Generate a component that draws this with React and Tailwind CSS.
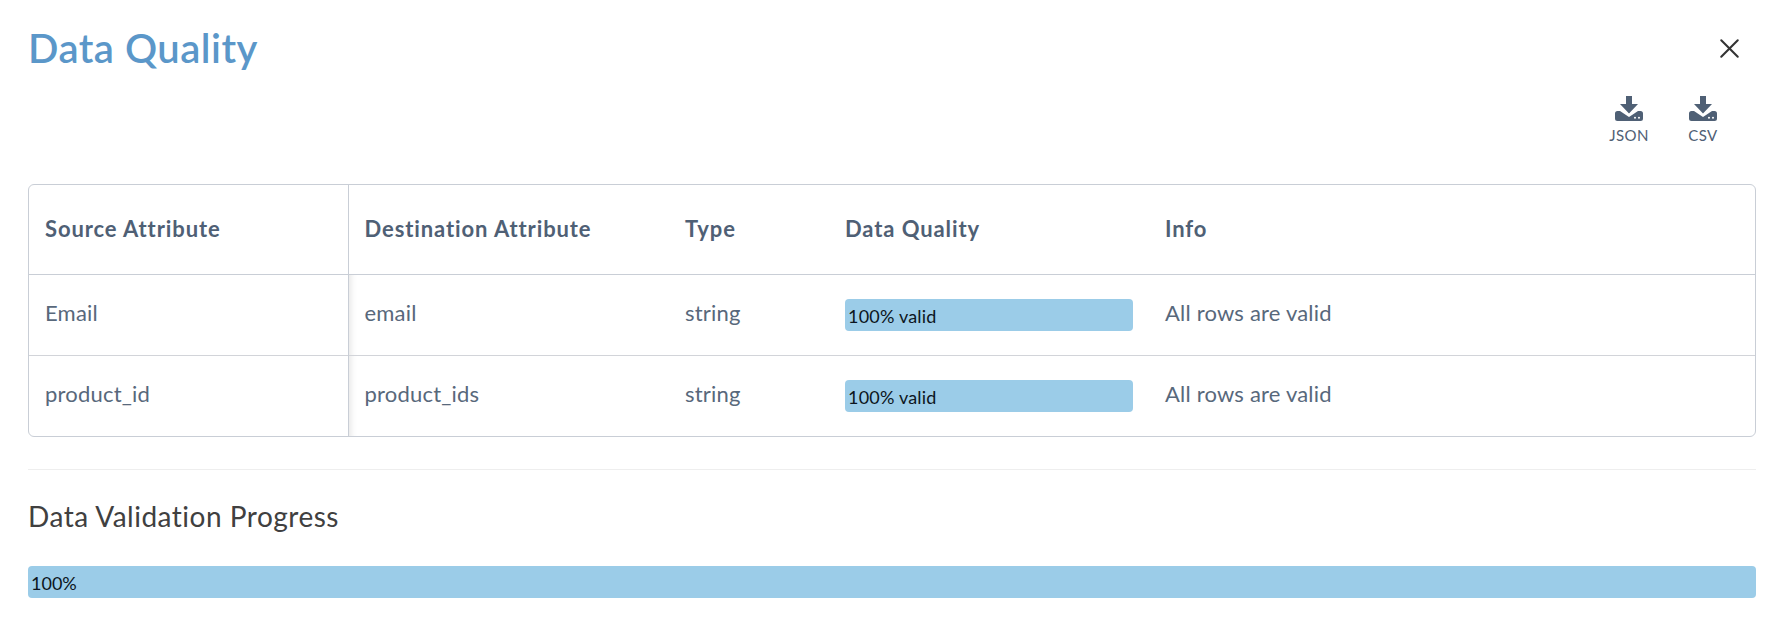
import { X } from "lucide-react";

const rows = [
  { source: "Email", destination: "email", type: "string", quality: 100, info: "All rows are valid" },
  { source: "product_id", destination: "product_ids", type: "string", quality: 100, info: "All rows are valid" },
];

const headers = ["Destination Attribute", "Type", "Data Quality", "Info"];
const colWidths = ["w-[321px]", "w-[160px]", "w-[320px]", ""];

function DownloadIcon() {
  return (
    <svg width="28" height="25" viewBox="0 0 28 25" fill="#4f6075">
      <path d="M11 0h6v8h6l-9 9.500-9-9.500h6z" />
      <path fillRule="evenodd" d="M2.500 15H5l9 6 9-6h2.500A2.500 2.500 0 0 1 28 17.500V22.500A2.500 2.500 0 0 1 25.500 25H2.500A2.500 2.500 0 0 1 0 22.500V17.500A2.500 2.500 0 0 1 2.500 15zM20 20.800a1 1 0 1 0 0 2 1 1 0 0 0 0-2zM24 20.800a1 1 0 1 0 0 2 1 1 0 0 0 0-2z" />
    </svg>
  );
}

function Bar({ label }) {
  return (
    <div className="h-8 w-full rounded-[4px] bg-[#9bcce8] pt-[1px] pl-[3px] text-[18px] leading-8 text-[#0c1520]">
      {label}
    </div>
  );
}

export default function App() {
  return (
    <div className="h-[634px] w-[1780px] overflow-hidden bg-white pr-[24px] pl-[28px] font-['Lato',sans-serif]">
      {/* Title row */}
      <div className="flex h-[96px] items-start justify-between">
        <h1 className="pt-[24px] text-[40px] leading-[48px] font-semibold tracking-[0.5px] text-[#5b97c9]">Data Quality</h1>
        <button className="mt-[32px] mr-[10px] text-[#333333]">
          <X size={33} strokeWidth={1.5} />
        </button>
      </div>

      {/* Downloads */}
      <div className="flex h-[88px] items-start justify-end gap-[34px] pr-[33px]">
        <div className="flex w-[40px] flex-col items-center gap-[5px] text-[15px] leading-[18px] tracking-[0.4px] text-[#4f6075]">
          <DownloadIcon />
          <span>JSON</span>
        </div>
        <div className="flex w-[40px] flex-col items-center gap-[5px] text-[15px] leading-[18px] tracking-[0.4px] text-[#4f6075]">
          <DownloadIcon />
          <span>CSV</span>
        </div>
      </div>

      {/* Attributes table */}
      <div className="overflow-hidden rounded-[6px] border border-[#c9ced6]">
        <table className="w-full table-fixed border-collapse">
          <thead>
            <tr className="h-[89px] border-b border-[#c9ced6] text-left text-[22px] font-bold tracking-[0.9px] text-[#4f6075]">
              <th className="w-[319px] border-r border-[#c9ced6] pb-[2px] pl-4">Source Attribute</th>
              {headers.map((h, i) => (
                <th key={h} className={`${colWidths[i]} pb-[2px] pl-4 font-bold`}>{h}</th>
              ))}
            </tr>
          </thead>
          <tbody className="text-[22px] tracking-[0.2px] text-[#58687b]">
            {rows.map((r, i) => (
              <tr key={r.source} className={`h-[81px] ${i === 0 ? "border-b border-[#d2d4d9]" : ""}`}>
                <td className="border-r border-[#c9ced6] pb-[5px] pl-4">{r.source}</td>
                <td className="pb-[5px] pl-4 shadow-[inset_8px_0_6px_-6px_rgba(0,0,0,0.1)]">{r.destination}</td>
                <td className="pb-[5px] pl-4">{r.type}</td>
                <td className="px-4"><Bar label={`${r.quality}% valid`} /></td>
                <td className="pb-[5px] pl-4">{r.info}</td>
              </tr>
            ))}
          </tbody>
        </table>
      </div>

      <div className="mt-[32px] border-t border-[#eeeeee]" />

      <h2 className="mt-[30px] text-[28px] leading-[32px] tracking-[0.5px] text-[#404040]">Data Validation Progress</h2>

      <div className="mt-[34px]">
        <Bar label="100%" />
      </div>
    </div>
  );
}
